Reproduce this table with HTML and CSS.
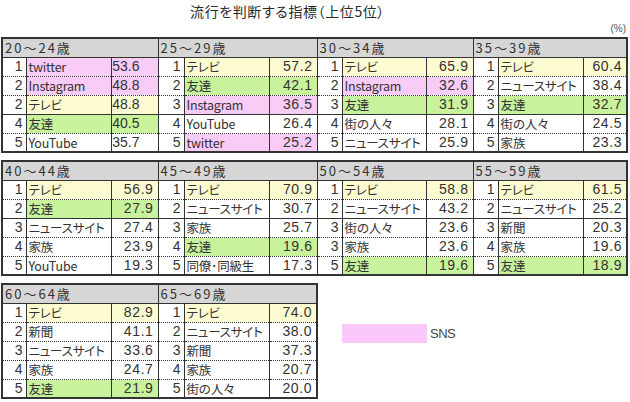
FILE: index.html
```html
<!DOCTYPE html>
<html lang="ja">
<head>
<meta charset="utf-8">
<title>流行を判断する指標（上位5位）</title>
<link rel="stylesheet" href="styles.css">
</head>
<body>
<div class="page">
  <div class="title">流行を判断する指標（上位5位）</div>
  <div class="unit">(%)</div>

  <table class="rank-table full">
    <colgroup>
      <col class="c-r1"><col class="c-n1"><col class="c-v1">
      <col class="c-r2"><col class="c-n2"><col class="c-v2">
      <col class="c-r3"><col class="c-n3"><col class="c-v3">
      <col class="c-r4"><col class="c-n4"><col class="c-v4">
    </colgroup>
    <tr class="head"><th colspan="3">20～24歳</th><th colspan="3">25～29歳</th><th colspan="3">30～34歳</th><th colspan="3">35～39歳</th></tr>
    <tr><td class="r">1</td><td class="n p">twitter</td><td class="v p padl">53.6</td><td class="r">1</td><td class="n y">テレビ</td><td class="v y">57.2</td><td class="r">1</td><td class="n y">テレビ</td><td class="v y">65.9</td><td class="r">1</td><td class="n y">テレビ</td><td class="v y">60.4</td></tr>
    <tr><td class="r">2</td><td class="n p">Instagram</td><td class="v p padl">48.8</td><td class="r">2</td><td class="n g">友達</td><td class="v g">42.1</td><td class="r">2</td><td class="n p">Instagram</td><td class="v p">32.6</td><td class="r">2</td><td class="n">ニュースサイト</td><td class="v">38.4</td></tr>
    <tr class="solid"><td class="r">2</td><td class="n y">テレビ</td><td class="v y padl">48.8</td><td class="r">3</td><td class="n p">Instagram</td><td class="v p">36.5</td><td class="r">3</td><td class="n g">友達</td><td class="v g">31.9</td><td class="r">3</td><td class="n g">友達</td><td class="v g">32.7</td></tr>
    <tr><td class="r">4</td><td class="n g">友達</td><td class="v g padl">40.5</td><td class="r">4</td><td class="n">YouTube</td><td class="v">26.4</td><td class="r">4</td><td class="n">街の人々</td><td class="v">28.1</td><td class="r">4</td><td class="n">街の人々</td><td class="v">24.5</td></tr>
    <tr><td class="r">5</td><td class="n">YouTube</td><td class="v padl">35.7</td><td class="r">5</td><td class="n p">twitter</td><td class="v p">25.2</td><td class="r">5</td><td class="n">ニュースサイト</td><td class="v">25.9</td><td class="r">5</td><td class="n">家族</td><td class="v">23.3</td></tr>
  </table>

  <table class="rank-table full">
    <colgroup>
      <col class="c-r1"><col class="c-n1"><col class="c-v1">
      <col class="c-r2"><col class="c-n2"><col class="c-v2">
      <col class="c-r3"><col class="c-n3"><col class="c-v3">
      <col class="c-r4"><col class="c-n4"><col class="c-v4">
    </colgroup>
    <tr class="head"><th colspan="3">40～44歳</th><th colspan="3">45～49歳</th><th colspan="3">50～54歳</th><th colspan="3">55～59歳</th></tr>
    <tr><td class="r">1</td><td class="n y">テレビ</td><td class="v y">56.9</td><td class="r">1</td><td class="n y">テレビ</td><td class="v y">70.9</td><td class="r">1</td><td class="n y">テレビ</td><td class="v y">58.8</td><td class="r">1</td><td class="n y">テレビ</td><td class="v y">61.5</td></tr>
    <tr class="solid"><td class="r">2</td><td class="n g">友達</td><td class="v g">27.9</td><td class="r">2</td><td class="n">ニュースサイト</td><td class="v">30.7</td><td class="r">2</td><td class="n">ニュースサイト</td><td class="v">43.2</td><td class="r">2</td><td class="n">ニュースサイト</td><td class="v">25.2</td></tr>
    <tr><td class="r">3</td><td class="n">ニュースサイト</td><td class="v">27.4</td><td class="r">3</td><td class="n">家族</td><td class="v">25.7</td><td class="r">3</td><td class="n">街の人々</td><td class="v">23.6</td><td class="r">3</td><td class="n">新聞</td><td class="v">20.3</td></tr>
    <tr><td class="r">4</td><td class="n">家族</td><td class="v">23.9</td><td class="r">4</td><td class="n g">友達</td><td class="v g">19.6</td><td class="r">3</td><td class="n">家族</td><td class="v">23.6</td><td class="r">4</td><td class="n">家族</td><td class="v">19.6</td></tr>
    <tr><td class="r">5</td><td class="n">YouTube</td><td class="v">19.3</td><td class="r">5</td><td class="n">同僚･同級生</td><td class="v">17.3</td><td class="r">5</td><td class="n g">友達</td><td class="v g">19.6</td><td class="r">5</td><td class="n g">友達</td><td class="v g">18.9</td></tr>
  </table>

  <div class="last-row">
    <table class="rank-table half">
      <colgroup>
        <col class="c-r1"><col class="c-n1"><col class="c-v1">
        <col class="c-r2"><col class="c-n2"><col class="c-v2">
      </colgroup>
      <tr class="head"><th colspan="3">60～64歳</th><th colspan="3">65～69歳</th></tr>
      <tr><td class="r">1</td><td class="n y">テレビ</td><td class="v y">82.9</td><td class="r">1</td><td class="n y">テレビ</td><td class="v y">74.0</td></tr>
      <tr><td class="r">2</td><td class="n">新聞</td><td class="v">41.1</td><td class="r">2</td><td class="n">ニュースサイト</td><td class="v">38.0</td></tr>
      <tr><td class="r">3</td><td class="n">ニュースサイト</td><td class="v">33.6</td><td class="r">3</td><td class="n">新聞</td><td class="v">37.3</td></tr>
      <tr><td class="r">4</td><td class="n">家族</td><td class="v">24.7</td><td class="r">4</td><td class="n">家族</td><td class="v">20.7</td></tr>
      <tr><td class="r">5</td><td class="n g">友達</td><td class="v g">21.9</td><td class="r">5</td><td class="n">街の人々</td><td class="v">20.0</td></tr>
    </table>
    <div class="legend">
      <span class="legend-swatch"></span>
      <span class="legend-label">SNS</span>
    </div>
  </div>
</div>
</body>
</html>
```

FILE: styles.css
```css
* { box-sizing: border-box; }

body {
  margin: 0;
  background: #ffffff;
  color: #333333;
  font-family: "Noto Sans CJK JP", "Noto Sans", sans-serif;
  font-feature-settings: "palt";
}

.page {
  width: 630px;
  height: 402px;
  padding: 0 4px 0 1px;
  overflow: hidden;
}

.title {
  height: 22px;
  padding: 2px 52px 0 0;
  font-size: 14px;
  line-height: 18px;
  text-align: center;
  letter-spacing: 0.6px;
  color: #2a2a2a;
}

.unit {
  height: 15px;
  font-family: "Liberation Sans", sans-serif;
  font-size: 10px;
  line-height: 14px;
  text-align: right;
  color: #555555;
}

.rank-table {
  border-collapse: collapse;
  table-layout: fixed;
  border: 2px solid #333333;
  margin-bottom: 7px;
}

.rank-table.full { width: 625px; }
.rank-table.half { width: 315px; margin-bottom: 0; }

.c-r1 { width: 24px; }
.c-n1 { width: 85px; }
.c-v1 { width: 47px; }
.c-r2 { width: 26px; }
.c-n2 { width: 85px; }
.c-v2 { width: 48px; }
.c-r3 { width: 25px; }
.c-n3 { width: 84px; }
.c-v3 { width: 47px; }
.c-r4 { width: 25px; }
.c-n4 { width: 85px; }
.c-v4 { width: 44px; }

.rank-table th {
  height: 19px;
  padding: 0 0 0 2px;
  background: #d6d6d6;
  border: 1px solid #333333;
  font-weight: normal;
  font-size: 13px;
  line-height: 17px;
  letter-spacing: 2px;
  text-align: left;
  white-space: nowrap;
}

.rank-table td {
  height: 19px;
  padding: 0;
  font-size: 12.5px;
  line-height: 17px;
  border-left: 1px solid #333333;
  border-right: 1px solid #333333;
  border-bottom: 1px dotted #333333;
  white-space: nowrap;
  overflow: hidden;
}

.rank-table tr:last-child td { border-bottom: 1px solid #333333; }
.rank-table tr.solid td { border-bottom: 1px solid #333333; }

.r {
  text-align: right;
  padding-right: 3px !important;
  font-family: "Liberation Sans", sans-serif;
  font-size: 14px !important;
}

.n {
  padding-left: 2px !important;
  letter-spacing: -0.2px;
}

.v {
  text-align: right;
  padding-right: 4px !important;
  font-family: "Liberation Sans", sans-serif;
  font-size: 14px !important;
  letter-spacing: 0.6px;
}

.v.padl {
  padding-right: 18px !important;
  letter-spacing: 0;
}

.p { background: #f9cbf7; }
.y { background: #fdfbd2; }
.g { background: #c8f29c; }

.last-row {
  display: flex;
  align-items: flex-start;
}

.legend {
  display: flex;
  align-items: center;
  margin-left: 24px;
  margin-top: 41px;
}

.legend-swatch {
  width: 85px;
  height: 19px;
  background: #fbc8fb;
}

.legend-label {
  margin-left: 3px;
  font-family: "Liberation Sans", sans-serif;
  font-size: 13px;
  letter-spacing: -0.5px;
  color: #444444;
}
```
